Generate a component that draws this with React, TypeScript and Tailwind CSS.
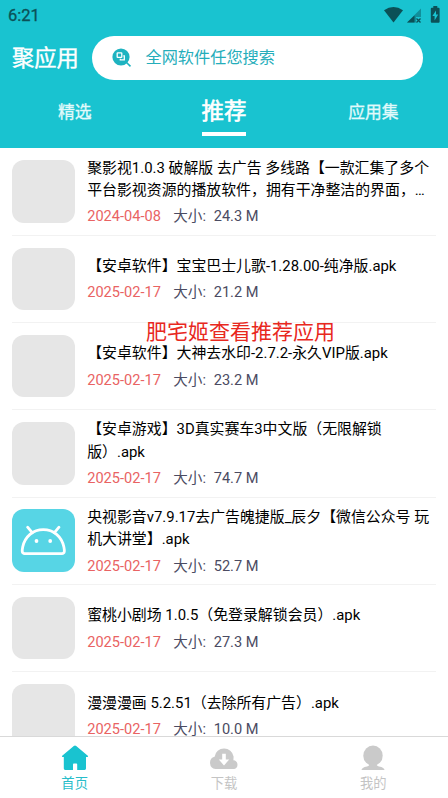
import clsx from "clsx";
import type { ReactNode } from "react";

type AppItem = {
    title: string;
    date: string;
    size: string;
    android?: boolean;
};

type NavItem = {
    label: string;
    icon: ReactNode;
    active?: boolean;
};

const apps: AppItem[] = [
    {
        title: "聚影视1.0.3 破解版 去广告 多线路【一款汇集了多个\n平台影视资源的播放软件，拥有干净整洁的界面，…",
        date: "2024-04-08",
        size: "24.3 M",
    },
    {
        title: "【安卓软件】宝宝巴士儿歌-1.28.00-纯净版.apk",
        date: "2025-02-17",
        size: "21.2 M",
    },
    {
        title: "【安卓软件】大神去水印-2.7.2-永久VIP版.apk",
        date: "2025-02-17",
        size: "23.2 M",
    },
    {
        title: "【安卓游戏】3D真实赛车3中文版（无限解锁\n版）.apk",
        date: "2025-02-17",
        size: "74.7 M",
    },
    {
        title: "央视影音v7.9.17去广告魄捷版_辰夕【微信公众号 玩\n机大讲堂】.apk",
        date: "2025-02-17",
        size: "52.7 M",
        android: true,
    },
    {
        title: "蜜桃小剧场 1.0.5（免登录解锁会员）.apk",
        date: "2025-02-17",
        size: "27.3 M",
    },
    {
        title: "漫漫漫画 5.2.51（去除所有广告）.apk",
        date: "2025-02-17",
        size: "10.0 M",
    },
];

function StatusBar() {
    return (
        <div className="flex h-8 items-center justify-between pr-[8px] pl-[8px] text-[#0b5157]">
            <span className="text-[16.5px] leading-8 [-webkit-text-stroke:0.3px]">6:21</span>
            <svg width="56" height="18" viewBox="0 0 56 18" className="-mt-[3px]">
                <path d="M0 4.2 Q9.5 -2.2 19 4.2 L9.5 16.5 Z" fill="#0b5157" />
                <path d="M37 2.5 V11 H32 V16.5 H23 Z" fill="#118f9a" />
                <path d="M30.5 9.5 V16.5 H23 Z" fill="#0b5157" />
                <path
                    d="M32.5 12.5 L36.5 16.5 M36.5 12.5 L32.5 16.5"
                    stroke="#0b5157"
                    strokeWidth="1.3"
                />
                <path
                    d="M48 1.8 H49.3 V0 H53.3 V1.8 H54.6 Q55.6 1.8 55.6 2.8 V15.7 Q55.6 16.7 54.6 16.7 H47.8 Q46.8 16.7 46.8 15.7 V2.8 Q46.8 1.8 47.8 1.8 Z"
                    fill="#0b5157"
                />
                <path d="M52 4.5 L48.4 10 H50.6 V14.4 L54.2 8.4 H52 Z" fill="#19c3d0" />
            </svg>
        </div>
    );
}

function SearchIcon() {
    return (
        <svg width="20" height="20" viewBox="0 0 20 20">
            <circle cx="9" cy="9" r="8.6" fill="#1eb3c0" />
            <path d="M14.5 14.5 L18.5 18.3" stroke="#1eb3c0" strokeWidth="1.6" />
            <g fill="none" stroke="#fff" strokeWidth="1.3">
                <rect x="5.2" y="4.8" width="4.6" height="4.6" rx="0.5" />
                <path d="M11.3 7.8 H12.3 V11.8 H8.3 V10.8" />
            </g>
        </svg>
    );
}

function AndroidIcon() {
    return (
        <svg width="62.6" height="62.6" viewBox="0 0 62.6 62.6">
            <g
                fill="none"
                stroke="#fff"
                strokeWidth="2.8"
                strokeLinecap="round"
                strokeLinejoin="round"
            >
                <path d="M12.7 44.6 C9.6 44.6 10 41.5 10.7 38 C13 27.5 21 20.7 31.3 20.7 C41.6 20.7 49.6 27.5 51.9 38 C52.6 41.5 53 44.6 49.9 44.6 Z" />
                <path d="M15.6 18.2 L20.4 23.8 M47 18.2 L42.2 23.8" />
            </g>
            <circle cx="24.5" cy="32" r="1.9" fill="#fff" />
            <circle cx="38.2" cy="32" r="1.9" fill="#fff" />
        </svg>
    );
}

const navItems: NavItem[] = [
    {
        label: "首页",
        active: true,
        icon: (
            <svg width="28" height="26" viewBox="0 0 28 26" fill="#19c3d0">
                <path d="M12.8 1 Q14 0 15.2 1 L26.8 10.8 Q27.5 11.8 26.4 12 H25 V23.6 Q25 25 23.6 25 H16.2 V19.4 Q16.2 18.6 15.4 18.6 H12.8 Q12 18.6 12 19.4 V25 H4.2 Q2.8 25 2.8 23.6 V12 H1.6 Q0.5 11.8 1.2 10.8 Z" />
            </svg>
        ),
    },
    {
        label: "下载",
        icon: (
            <svg width="30" height="26" viewBox="0 0 30 26">
                <path
                    d="M6.5 24 A6.3 6.3 0 0 1 5.6 11.7 A9.6 9.6 0 0 1 24.6 11.5 L24.4 15.2 A4.5 4.5 0 0 1 25.2 24 Z"
                    fill="#cacaca"
                />
                <path d="M13.2 8.8 H16.8 V14.6 H20.2 L15 20.4 L9.8 14.6 H13.2 Z" fill="#fff" />
            </svg>
        ),
    },
    {
        label: "我的",
        icon: (
            <svg width="24" height="26" viewBox="0 0 24 26" fill="#cacaca">
                <ellipse cx="12" cy="10.7" rx="9.7" ry="10.1" />
                <path d="M8.5 18 H15.5 Q15 20.6 18 21.4 Q23.5 22.4 23.5 25 H0.5 Q0.5 22.4 6 21.4 Q9 20.6 8.5 18 Z" />
            </svg>
        ),
    },
];

function AppRow({ item }: { item: AppItem }) {
    return (
        <div className="mx-3 flex h-[87.3px] shrink-0 items-center border-b border-[#f2f2f2]">
            <div
                className={clsx(
                    "mr-[12.6px] size-[62.6px] shrink-0 overflow-hidden rounded-[12px]",
                    item.android ? "bg-[#57d5e5]" : "bg-[#e6e6e6]",
                )}
            >
                {item.android && <AndroidIcon />}
            </div>
            <div className="pt-[1.4px]">
                <p className="text-[14.9px] leading-[22.6px] whitespace-pre text-black">
                    {item.title}
                </p>
                <p className="mt-[4.6px] flex text-[14.6px] leading-[21.6px] text-[#4b4b62]">
                    <span className="w-[86px] text-[#e96363]">{item.date}</span>
                    <span className="w-[40.5px]">大小:</span>
                    <span>{item.size}</span>
                </p>
            </div>
        </div>
    );
}

export default function App() {
    return (
        <div className="relative flex h-[798px] w-[448px] flex-col overflow-hidden bg-white font-['Roboto','Noto_Sans_CJK_SC',sans-serif]">
            <header className="h-[148px] shrink-0 bg-[#19c3d0] text-white">
                <StatusBar />
                <div className="flex items-center pt-[4px] pl-[12px]">
                    <h1 className="w-[80px] text-[22.3px] leading-[44px] [-webkit-text-stroke:0.4px]">
                        聚应用
                    </h1>
                    <div className="flex h-[44px] w-[331px] items-center rounded-full bg-white pl-5">
                        <SearchIcon />
                        <span className="ml-[13.5px] text-[16.2px] text-[#25adba]">
                            全网软件任您搜索
                        </span>
                    </div>
                </div>
                <nav className="grid h-[60px] grid-cols-3 text-center text-[16.8px] leading-[62px] [-webkit-text-stroke:0.3px]">
                    <span className="pt-px text-[#e2fafb]">精选</span>
                    <span className="flex flex-col items-center text-[22.5px] [-webkit-text-stroke:0.6px]">
                        <span className="h-[52px]">推荐</span>
                        <span className="h-1 w-11 bg-white" />
                    </span>
                    <span className="pt-px text-[#e2fafb]">应用集</span>
                </nav>
            </header>

            <main className="flex min-h-0 flex-1 flex-col overflow-hidden pt-[0.4px]">
                {apps.map((item) => (
                    <AppRow key={item.title} item={item} />
                ))}
            </main>

            <footer className="grid h-[62px] shrink-0 grid-cols-3 border-t border-[#d9d9d9] bg-white pt-[8px]">
                {navItems.map((nav) => (
                    <div
                        key={nav.label}
                        className={clsx(
                            "flex flex-col items-center text-[13.3px] leading-[26px]",
                            nav.active ? "text-[#27bdca]" : "text-[#c4c4c4]",
                        )}
                    >
                        {nav.icon}
                        <span>{nav.label}</span>
                    </div>
                ))}
            </footer>

            {/* caption laid over the list */}
            <div className="absolute top-[317px] left-[146px] text-[21px] leading-[30px] whitespace-nowrap text-[#e8281e]">
                肥宅姬查看推荐应用
            </div>
        </div>
    );
}
